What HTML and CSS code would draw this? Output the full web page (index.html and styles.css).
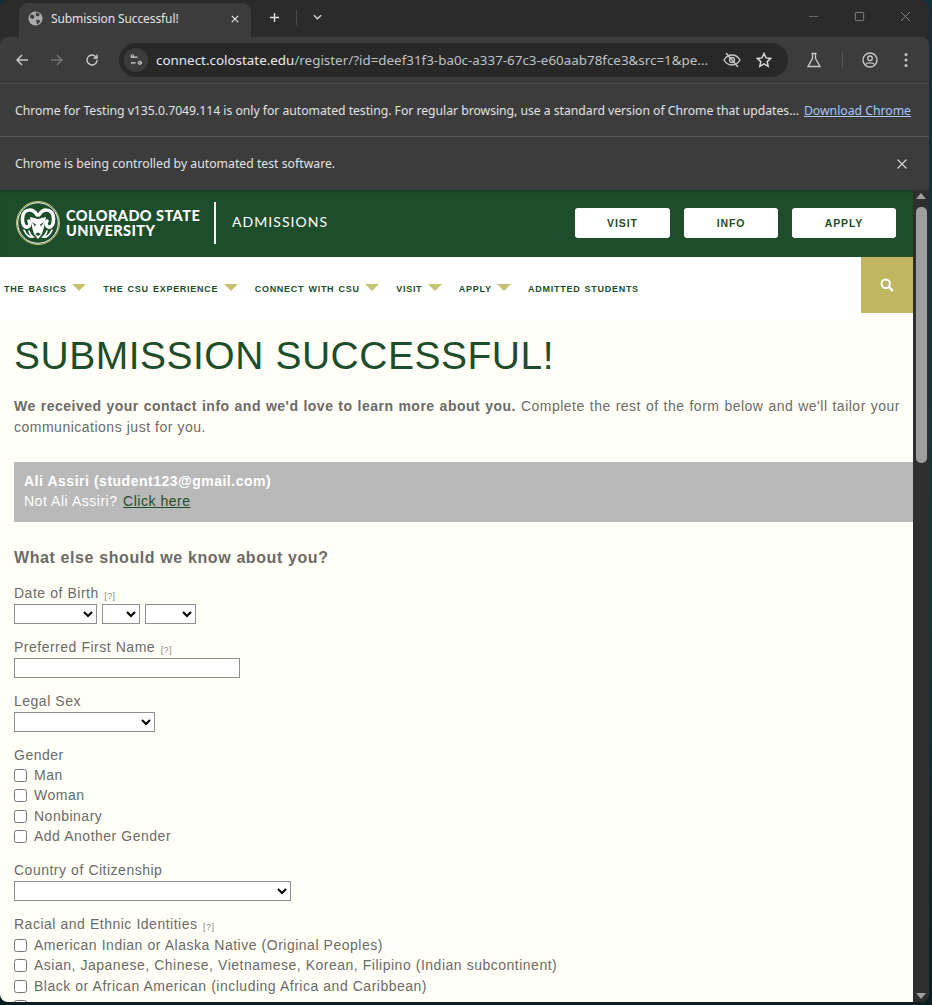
FILE: index.html
```html
<!DOCTYPE html>
<html lang="en">
<head>
<meta charset="utf-8">
<title>Submission Successful!</title>
<link rel="stylesheet" href="styles.css">
</head>
<body>
<div class="window">
  <div class="titlebar">
    <div class="tab">
      <svg class="globe" viewBox="0 0 16 16"><circle cx="8" cy="8" r="7.500" fill="#a9abae"/><path d="M3 3.500l3 1 1 2.500-2 1.500-3-1.500zM9 1.500l3.500 1.500-1 2.500-2.500 0-1-2zM9 9l3 .5 1 2-3 3-1-2.500z" fill="#3c3c3c"/></svg>
      <span class="tab-title">Submission Successful!</span>
      <svg class="tab-close" viewBox="0 0 10 10"><path d="M1 1l8 8M9 1l-8 8" stroke="#e3e3e3" stroke-width="1.500"/></svg>
    </div>
    <svg class="newtab" viewBox="0 0 12 12"><path d="M6 1v10M1 6h10" stroke="#e3e3e3" stroke-width="1.500"/></svg>
    <span class="tsep"></span>
    <svg class="tabmenu" viewBox="0 0 10 6"><path d="M1 1l4 4 4-4" fill="none" stroke="#d5d5d5" stroke-width="1.600"/></svg>
    <div class="winctl">
      <svg viewBox="0 0 12 12"><path d="M1 6h10" stroke="#6f6f6f" stroke-width="1"/></svg>
      <svg viewBox="0 0 12 12"><rect x="1.500" y="1.500" width="9" height="9" rx="1" fill="none" stroke="#8a8a8a"/></svg>
      <svg viewBox="0 0 12 12"><path d="M1 1l10 10M11 1l-10 10" stroke="#8a8a8a"/></svg>
    </div>
  </div>
  <div class="toolbar">
    <svg class="nav" viewBox="0 0 14 14"><path d="M13 7H2M7 2L2 7l5 5" fill="none" stroke="#c7c7c7" stroke-width="1.500"/></svg>
    <svg class="nav" viewBox="0 0 14 14"><path d="M1 7h11M7 2l5 5-5 5" fill="none" stroke="#737373" stroke-width="1.500"/></svg>
    <svg class="nav" viewBox="0 0 14 14"><path d="M12 7a5 5 0 1 1-1.500-3.600L12 5V1.500M12 5H8.500" fill="none" stroke="#c7c7c7" stroke-width="1.400"/></svg>
    <div class="omnibox">
      <span class="site-ic">
        <svg viewBox="0 0 14 12"><path d="M1 3h7M10 9h3M1 9h5" stroke="#d5d5d5" stroke-width="1.300"/><circle cx="2.500" cy="1.800" r="1.500" fill="none" stroke="#d5d5d5"/><circle cx="10.500" cy="9" r="1.800" fill="none" stroke="#d5d5d5"/></svg>
      </span>
      <span class="url"><span class="host">connect.colostate.edu</span>/register/?id=deef31f3-ba0c-a337-67c3-e60aab78fce3&amp;src=1&amp;pe...</span>
      <svg class="omni-ic" viewBox="0 0 18 16"><path d="M1 8s3-5 8-5 8 5 8 5-3 5-8 5-8-5-8-5z" fill="none" stroke="#c7c7c7" stroke-width="1.400"/><circle cx="9" cy="8" r="2.500" fill="none" stroke="#c7c7c7" stroke-width="1.300"/><path d="M3 1l12 14" stroke="#c7c7c7" stroke-width="1.400"/></svg>
      <svg class="omni-ic star" viewBox="0 0 16 16"><path d="M8 1.500l2 4.400 4.700.5-3.500 3.200 1 4.700L8 11.900l-4.200 2.400 1-4.700L1.300 6.400 6 5.900z" fill="none" stroke="#d5d5d5" stroke-width="1.500"/></svg>
    </div>
    <svg class="tool flask" viewBox="0 0 16 16"><path d="M5.500 1.500h5M6.500 1.500v5L2 14.500h12L9.500 6.500v-5" fill="none" stroke="#c7c7c7" stroke-width="1.400"/></svg>
    <span class="tbsep"></span>
    <svg class="tool avatar" viewBox="0 0 16 16"><circle cx="8" cy="8" r="7" fill="none" stroke="#c7c7c7" stroke-width="1.400"/><circle cx="8" cy="6.300" r="2.300" fill="none" stroke="#c7c7c7" stroke-width="1.300"/><path d="M3.500 12.500c1.500-2.200 7.500-2.200 9 0" fill="none" stroke="#c7c7c7" stroke-width="1.300"/></svg>
    <svg class="tool dots" viewBox="0 0 4 16"><circle cx="2" cy="2.500" r="1.500" fill="#c7c7c7"/><circle cx="2" cy="8" r="1.500" fill="#c7c7c7"/><circle cx="2" cy="13.500" r="1.500" fill="#c7c7c7"/></svg>
  </div>
  <div class="infobar first">
    <span class="msg">Chrome for Testing v135.0.7049.114 is only for automated testing. For regular browsing, use a standard version of Chrome that updates...</span>
    <a class="dl">Download Chrome</a>
  </div>
  <div class="infobar second">
    <span class="msg">Chrome is being controlled by automated test software.</span>
    <svg class="info-close" viewBox="0 0 10 10"><path d="M.5.5l9 9M9.500.5l-9 9" stroke="#d5d5d5" stroke-width="1.200"/></svg>
  </div>
  <div class="viewport">
    <div class="page">
      <header class="csu">
        <div class="brand">
          <svg class="ram" viewBox="0 0 44 44">
            <circle cx="22" cy="22" r="21.500" fill="#1e4d2b" stroke="#c8c372" stroke-width="1"/>
            <circle cx="22" cy="22" r="20.300" fill="#1e4d2b" stroke="#fff" stroke-width="1"/>
            <g fill="none" stroke="#fff" stroke-linecap="round">
              <path d="M21 14C17 7 9 8 7 14 5.500 20 7 25 10 26c3 1 5-3 3-6" stroke-width="3.500"/>
              <path d="M23 14c4-7 12-6 14 0 1.500 6 0 11-3 12-3 1-5-3-3-6" stroke-width="3.500"/>
              <path d="M8 29c2 5 6 8 9 7-2-1-3-3-4-6M36 29c-2 5-6 8-9 7 2-1 3-3 4-6" stroke-width="1.600"/>
            </g>
            <path d="M14 16l8 2 8-2-2 10-2 7-4 5-4-5-2-7z" fill="#fff"/>
            <path d="M16 21l4 2.500-1 2zM28 21l-4 2.500 1 2zM19 33l3 2 3-2-3-1.500z" fill="#1e4d2b"/>
          </svg>
          <div class="wordmark">COLORADO STATE<br>UNIVERSITY</div>
          <span class="brand-rule"></span>
          <span class="unit">ADMISSIONS</span>
        </div>
        <nav class="cta">
          <a class="btn visit">VISIT</a>
          <a class="btn info">INFO</a>
          <a class="btn apply">APPLY</a>
        </nav>
      </header>
      <nav class="mainnav">
        <a class="ni">THE BASICS<i class="caret"></i></a>
        <a class="ni">THE CSU EXPERIENCE<i class="caret"></i></a>
        <a class="ni">CONNECT WITH CSU<i class="caret"></i></a>
        <a class="ni">VISIT<i class="caret"></i></a>
        <a class="ni">APPLY<i class="caret"></i></a>
        <a class="ni">ADMITTED STUDENTS</a>
        <span class="search">
          <svg viewBox="0 0 14 14"><circle cx="5.700" cy="5.700" r="4.200" fill="none" stroke="#fff" stroke-width="2"/><path d="M8.800 8.800l4 4" stroke="#fff" stroke-width="2.400"/></svg>
        </span>
      </nav>
      <main class="content">
        <h1>SUBMISSION SUCCESSFUL!</h1>
        <p class="intro"><b>We received your contact info and we'd love to learn more about you.</b> Complete the rest of the form below and we'll tailor your communications just for you.</p>
        <div class="who">
          <b>Ali Assiri (student123@gmail.com)</b><br>
          Not Ali Assiri? <a class="here">Click here</a>
        </div>
        <h2>What else should we know about you?</h2>
        <div class="field">
          <div class="lab">Date of Birth <span class="q">[?]</span></div>
          <div class="dob">
            <select class="s-month"><option></option></select>
            <select class="s-day"><option></option></select>
            <select class="s-year"><option></option></select>
          </div>
        </div>
        <div class="field">
          <div class="lab">Preferred First Name <span class="q">[?]</span></div>
          <input class="t-name" type="text">
        </div>
        <div class="field">
          <div class="lab">Legal Sex</div>
          <select class="s-sex"><option></option></select>
        </div>
        <div class="field checks">
          <div class="lab">Gender</div>
          <label class="chk"><input type="checkbox">Man</label>
          <label class="chk"><input type="checkbox">Woman</label>
          <label class="chk"><input type="checkbox">Nonbinary</label>
          <label class="chk"><input type="checkbox">Add Another Gender</label>
        </div>
        <div class="field">
          <div class="lab">Country of Citizenship</div>
          <select class="s-country"><option></option></select>
        </div>
        <div class="field races">
          <div class="lab">Racial and Ethnic Identities <span class="q">[?]</span></div>
          <label class="chk"><input type="checkbox">American Indian or Alaska Native (Original Peoples)</label>
          <label class="chk"><input type="checkbox">Asian, Japanese, Chinese, Vietnamese, Korean, Filipino (Indian subcontinent)</label>
          <label class="chk"><input type="checkbox">Black or African American (including Africa and Caribbean)</label>
          <label class="chk"><input type="checkbox"></label>
        </div>
      </main>
    </div>
    <div class="scrollbar">
      <i class="arrow up"></i>
      <span class="thumb"></span>
      <i class="arrow down"></i>
    </div>
  </div>
</div>
</body>
</html>
```
FILE: styles.css
```css
* { box-sizing: border-box; }
html, body { margin: 0; height: 100%; overflow: hidden; }
body { background: linear-gradient(180deg, #12303a 0%, #0f3a3c 60%, #0b1f22 100%); }
.window {
  width: 929px; height: 1002px; display: flex; flex-direction: column;
  background: #2b2b2b; border-radius: 8px; overflow: hidden;
  font-family: "Noto Sans", "Open Sans", sans-serif;
}
.titlebar { height: 37px; display: flex; align-items: flex-start; background: #2b2b2b; padding-left: 19px; flex: none; }
.tab {
  width: 232px; height: 34px; margin-top: 3px; background: #3c3c3c; border-radius: 9px 9px 0 0;
  display: flex; align-items: center; padding: 0 10px 3px 9px; color: #e3e3e3;
}
.globe { width: 15px; height: 15px; flex: none; }
.tab-title { font-size: 12px; margin-left: 8px; flex: 1; white-space: nowrap; letter-spacing: -.1px; }
.tab-close { width: 8px; height: 8px; margin-right: 2px; }
.newtab { width: 11px; height: 11px; margin: 12px 0 0 18px; }
.tsep { width: 1px; height: 15px; background: #4a4a4a; margin: 10px 0 0 16px; }
.tabmenu { width: 9px; height: 6px; margin: 14px 0 0 16px; }
.winctl { margin-left: auto; display: flex; gap: 35px; padding: 11px 18px 0 0; }
.winctl svg { width: 11px; height: 11px; }

.toolbar { height: 47px; flex: none; background: #3c3c3c; border-bottom: 1px solid #4a4a4a; display: flex; align-items: center; padding: 0 0 1px 15px; border-radius: 8px 8px 0 0; }
.nav { width: 14px; height: 14px; margin-right: 21px; flex: none; }
.nav:nth-child(3) { margin-right: 20px; }
.omnibox { width: 669px; height: 34px; background: #282828; border-radius: 17px; display: flex; align-items: center; padding: 0 16px 0 5px; flex: none; }
.site-ic { width: 24px; height: 24px; border-radius: 12px; background: #3c3c3c; display: flex; align-items: center; justify-content: center; flex: none; }
.site-ic svg { width: 13px; height: 12px; }
.url { font-size: 13.4px; color: #bfc3c7; margin-left: 8px; white-space: nowrap; flex: 1; overflow: hidden; letter-spacing: 0; }
.host { color: #e8eaed; }
.omni-ic { width: 18px; height: 16px; flex: none; }
.star { width: 16px; margin-left: 15px; }
.tool { flex: none; height: 16px; width: 16px; }
.flask { margin-left: 18px; }
.tbsep { width: 1px; height: 16px; background: #5a5a5a; margin: 0 19px 0 20px; flex: none; }
.dots { width: 4px; margin-left: 26px; }

.infobar { background: #3c3c3c; color: #e3e3e3; display: flex; align-items: center; flex: none; padding: 0 0 0 15px; font-size: 12.22px; white-space: nowrap; }
.first { height: 53px; border-bottom: 1px solid #585858; }
.second { height: 53px; }
.first .msg { letter-spacing: -.03px; }
.second .msg { letter-spacing: .013px; }
.dl { color: #a8c7fa; text-decoration: underline; margin-left: 5px; }
.info-close { width: 10px; height: 10px; margin-left: auto; margin-right: 22px; }

.viewport { flex: 1; display: flex; min-height: 0; }
.page { width: 913px; flex: none; background: #fffff7; overflow: hidden; font-family: "Liberation Sans", Arial, sans-serif; }
.scrollbar { width: 16px; background: #2f2f2f; display: flex; flex-direction: column; align-items: center; padding: 3px 0; }
.arrow { width: 0; height: 0; border-left: 5px solid transparent; border-right: 5px solid transparent; flex: none; }
.up { border-bottom: 6px solid #a0a0a0; }
.down { border-top: 6px solid #a0a0a0; margin-top: auto; }
.thumb { width: 11px; height: 256px; background: #9e9e9e; border-radius: 5px; margin-top: 8px; }

.csu { height: 67px; background: #1e4d2b; display: flex; align-items: center; justify-content: space-between; padding: 0 17px 1px 16px; box-shadow: inset 0 3px 3px -2px rgba(0,0,0,.3); }
.brand { display: flex; align-items: center; color: #fff; }
.ram { width: 44px; height: 44px; flex: none; }
.wordmark { font-family: "Lato", "Liberation Sans", sans-serif; font-weight: 900; font-size: 14.5px; line-height: 15px; letter-spacing: .45px; margin: 0 0 1px 6px; width: 143px; white-space: nowrap; }
.brand-rule { width: 2px; height: 42px; background: #fff; margin-left: 5px; }
.unit { font-family: "Lato", "Liberation Sans", sans-serif; font-size: 14px; letter-spacing: 1.05px; margin: 0 0 3px 16px; }
.cta { display: flex; gap: 14px; }
.btn { height: 30px; background: #fff; border-radius: 3px; color: #1e4d2b; font-size: 10.5px; font-weight: 700; letter-spacing: .9px; display: flex; align-items: center; justify-content: center; }
.visit { width: 95px; }
.info { width: 94px; }
.apply { width: 104px; }

.mainnav { height: 63px; background: #fff; display: flex; align-items: flex-start; padding-left: 4px; }
.ni { font-size: 9px; font-weight: 700; color: #1e4d2b; letter-spacing: .72px; word-spacing: 1px; display: flex; align-items: center; white-space: nowrap; margin: 27px 17px 0 0; }
.caret { width: 0; height: 0; margin: -3px 0 0 5.500px; border-left: 7px solid transparent; border-right: 7px solid transparent; border-top: 7px solid #c8c372; }
.search { width: 52px; height: 56px; background: #c0b561; margin-left: auto; display: flex; align-items: center; justify-content: center; }
.search svg { width: 14px; height: 14px; }

.content { padding: 6px 0 0 14px; color: #6c6a68; font-size: 14px; letter-spacing: .5px; word-spacing: .2px; }
h1 { margin: 0; font-size: 39px; font-weight: 400; color: #1e4d2b; letter-spacing: .5px; line-height: 60px; white-space: nowrap; }
.intro { margin: 10px 13px 0 0; line-height: 21px; text-align: justify; }
.who { margin-top: 24px; background: #b9b9b9; color: #fff; height: 60px; padding: 9px 10px; line-height: 20px; }
.here { color: #1e4d2b; text-decoration: underline; margin-left: 1px; }
h2 { margin: 25px 0 0; font-size: 16px; font-weight: 700; line-height: 21px; letter-spacing: .57px; }
.field { margin-top: 13px; }
h2 + .field { margin-top: 15px; }
.checks { margin-bottom: 14px; }
.lab { line-height: 20px; height: 20px; white-space: nowrap; }
.races .lab { height: 20.500px; }
.q { font-size: 9px; letter-spacing: .4px; color: #8a8a8a; margin-left: 1px; vertical-align: -1px; }
select, input.t-name { display: block; height: 20px; background: #fff; border: 1px solid #8f8f8f; border-radius: 0; padding: 0; margin: 0; font-size: 12px; font-family: "Liberation Sans", Arial, sans-serif; }
.dob { display: flex; gap: 5px; margin-top: 1px; }
.s-month { width: 83px; }
.s-day { width: 38px; }
.s-year { width: 51px; }
input.t-name { width: 226px; margin-top: 1px; }
.s-sex { width: 141px; margin-top: 1px; }
.s-country { width: 277px; margin-top: 1px; }
.chk { display: flex; align-items: center; height: 20.330px; white-space: nowrap; }
.chk input { width: 13px; height: 13px; margin: 1px 7px 0 0; flex: none; }
```
